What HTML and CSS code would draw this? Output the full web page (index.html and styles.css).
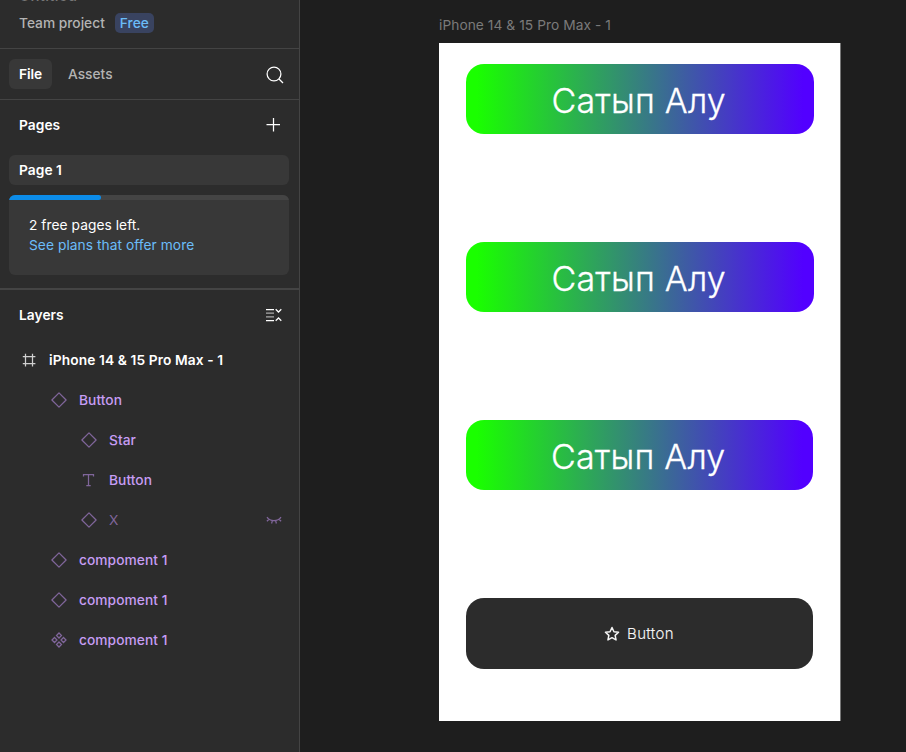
FILE: index.html
```html
<!DOCTYPE html>
<html lang="en">
<head>
<meta charset="utf-8">
<title>Team project</title>
<link rel="stylesheet" href="styles.css">
</head>
<body>
<svg class="defs" width="0" height="0">
  <symbol id="diamond" viewBox="0 0 16 16"><path d="M8 .9 15.1 8 8 15.1.9 8z" stroke-linejoin="round"/></symbol>
</svg>
<div class="app">
  <aside class="sidebar">
    <header class="project">
      <div class="filename">Untitled</div>
      <div class="team"><span>Team project</span><span class="badge">Free</span></div>
    </header>
    <nav class="tabs">
      <span class="tab active">File</span><span class="tab">Assets</span>
      <svg class="icon end search" width="18" height="18" viewBox="0 0 18 18"><circle cx="8" cy="8" r="6.9"/><path d="m13 13 4 4"/></svg>
    </nav>
    <section class="pages">
      <div class="heading"><span>Pages</span><svg class="icon end plus" width="14" height="14" viewBox="0 0 14 14"><path d="M7.500 0v13.500M.5 6.500h13.500"/></svg></div>
      <div class="page">Page 1</div>
      <div class="plan">
        <div class="track"><div class="progress"></div></div>
        <p>2 free pages left.</p>
        <a>See plans that offer more</a>
      </div>
    </section>
    <section class="layers">
      <div class="heading"><span>Layers</span><svg class="icon end" width="16" height="14" viewBox="0 0 16 14"><path d="M0 1.5h8M0 12.5h8"/><path class="dim" d="M0 5.2h8M0 8.8h8"/><path d="m9.7 1.2 2.8 2.8 2.8-2.8M9.7 12.8l2.8-2.8 2.8 2.8"/></svg></div>
      <div class="layer frame"><svg class="icon" width="16" height="16" viewBox="0 0 16 16"><path d="M4.5 1.800v12.600M11.5 1.800v12.600M1.800 4.5h12.600M1.800 11.5h12.600"/></svg><span>iPhone 14 &amp; 15 Pro Max - 1</span></div>
      <div class="layer l1"><svg class="icon" width="16" height="16"><use href="#diamond"/></svg><span>Button</span></div>
      <div class="layer l2"><svg class="icon" width="16" height="16"><use href="#diamond"/></svg><span>Star</span></div>
      <div class="layer l2"><svg class="icon type" width="16" height="16" viewBox="0 0 16 16"><path d="M2.5 4.5v-2h10v2M7.5 2.5v11M5.3 13.5h4.4"/></svg><span>Button</span></div>
      <div class="layer l2 hidden"><svg class="icon" width="16" height="16"><use href="#diamond"/></svg><span>X</span><svg class="icon end" width="16" height="9" viewBox="0 0 16 9"><path d="M1 1.2c3.2 4.6 10.8 4.6 14 0M3 3.2.9 5.3M6.4 4.6l-.8 2.9M9.6 4.6l.8 2.9M13 3.2l2.1 2.1"/></svg></div>
      <div class="layer l1"><svg class="icon" width="16" height="16"><use href="#diamond"/></svg><span>compoment 1</span></div>
      <div class="layer l1"><svg class="icon" width="16" height="16"><use href="#diamond"/></svg><span>compoment 1</span></div>
      <div class="layer l1"><svg class="icon" width="16" height="16" viewBox="0 0 16 16"><path d="m8 1 2.500 2.500L8 6 5.500 3.500zM8 10l2.500 2.500L8 15l-2.500-2.500zM3.500 5.500 6 8l-2.500 2.500L1 8zM12.500 5.500 15 8l-2.500 2.500L10 8z"/></svg><span>compoment 1</span></div>
    </section>
  </aside>
  <main class="canvas">
    <div class="label">iPhone 14 &amp; 15 Pro Max - 1</div>
    <div class="artboard">
      <div class="buy">Сатып Алу</div>
      <div class="buy">Сатып Алу</div>
      <div class="buy third">Сатып Алу</div>
      <div class="button"><svg class="star" width="16" height="16" viewBox="0 0 16 16"><path d="m8 1.500 1.950 4.200 4.600.55-3.400 3.150.9 4.550L8 11.700l-4.050 2.250.9-4.550-3.400-3.150 4.600-.55z"/></svg><span>Button</span></div>
    </div>
  </main>
</div>
</body>
</html>
```
FILE: styles.css
```css
* { box-sizing: border-box; }
body { margin: 0; background: #1e1e1e; font-family: Inter, "Liberation Sans", sans-serif; font-size: 13.75px; line-height: 20px; letter-spacing: 0.05px; color: #fff; }
p { margin: 0; }
.defs { display: block; position: absolute; }
.app { display: flex; height: 752px; overflow: hidden; }
.sidebar { width: 300px; flex: none; background: #2c2c2c; border-right: 1px solid #444; }
.icon { fill: none; stroke: currentColor; stroke-width: 1.25; flex: none; overflow: visible; }
.end { margin-left: auto; }
.project { height: 49px; padding: 0 19px; overflow: hidden; color: #b3b3b3; font-weight: 500; letter-spacing: 0; border-bottom: 1px solid #444; }
.filename { margin: -15px 0 8px; padding-top: 0.5px; height: 20px; font-size: 15px; font-weight: 500; letter-spacing: 0.3px; color: #777; }
.team { display: flex; gap: 10px; }
.badge { height: 20px; padding: 0 5px; border-radius: 5px; background: #394360; color: #6bbcf8; }
.tabs { height: 51px; padding: 0 15px 0 9px; display: flex; align-items: center; border-bottom: 1px solid #444; }
.search { margin-top: 1px; }
.tab { padding: 5px 10px; margin-right: 6px; border-radius: 6px; color: #b3b3b3; font-weight: 500; letter-spacing: 0; }
.active { width: 43px; padding-right: 0; background: #383838; color: #fff; font-weight: 600; letter-spacing: -0.1px; }
.pages { height: 190px; border-bottom: 2px solid #444; }
.heading { height: 50px; padding: 0 17px 0 19px; display: flex; align-items: center; font-weight: 600; }
.plus { margin-right: 2px; }
.page { margin: 5px 10px 10px 9px; height: 30px; padding: 5px 10px; border-radius: 6px; background: #383838; font-weight: 600; }
.plan { margin: 0 10px 0 9px; height: 80px; border-radius: 6px; background: #383838; overflow: hidden; }
.plan p, .plan a { display: block; margin-left: 20px; }
.plan a { color: #6bbcf8; }
.track { height: 5px; margin-bottom: 15px; background: #444; }
.progress { width: 92px; height: 5px; border-radius: 0 3px 3px 0; background: #0c8ce9; }
.layer { height: 40px; padding: 0 17px 0 51px; display: flex; align-items: center; gap: 12px; color: #c69cf4; font-weight: 500; }
.layer .icon { color: #80669b; }
.layer.frame { padding-left: 21px; color: #fff; font-weight: 600; letter-spacing: 0.1px; }
.layer.frame .icon { color: #d0d0d0; }
.layer.l2 { padding-left: 81px; }
.layer.hidden { color: #80669b; font-weight: 400; }
.dim { stroke: #aaa; }
.canvas { flex: 1; padding: 15px 0 0 139px; }
.label { height: 28px; color: #7a7a7a; letter-spacing: 0.05px; }
.artboard { width: 402px; height: 678px; padding: 20.500px 0 0 27px; background: #fff; border-right: 1px solid #777; }
.buy { width: 347.500px; height: 70px; margin-bottom: 108px; padding: 4px 2px 0 0; border-radius: 18px; background: linear-gradient(90deg, #1aff00 3%, #5200ff 97%); display: flex; align-items: center; justify-content: center; font-size: 34px; line-height: 42px; font-weight: 300; letter-spacing: 0.2px; -webkit-text-stroke: 0.3px #fff; }
.third { position: relative; left: -0.5px; }
.button { width: 347px; height: 71px; padding: 1px 0 0 0; border-radius: 18px; background: #2c2c2c; display: flex; align-items: center; justify-content: center; gap: 7px; font-size: 15px; font-weight: 300; color: #f5f5f5; letter-spacing: 0.35px; -webkit-text-stroke: 0.1px #f5f5f5; }
.star { fill: none; stroke: #f5f5f5; stroke-width: 1.500; stroke-linejoin: round; margin-left: -1px; }
```
